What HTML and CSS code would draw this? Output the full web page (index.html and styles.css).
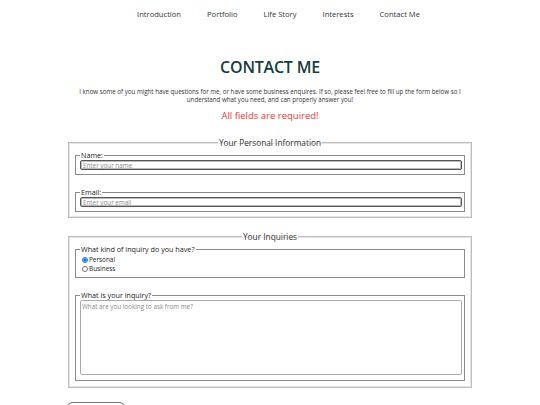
FILE: index.html
```html
<!DOCTYPE html>
<html>
<head>
<meta charset="utf-8">
<link rel="stylesheet" href="styles.css">
</head>
<body>
<nav class="nav">
  <a href="#">Introduction</a>
  <a href="#">Portfolio</a>
  <a href="#">Life Story</a>
  <a href="#">Interests</a>
  <a href="#">Contact Me</a>
</nav>
<main class="main">
  <h1 class="title">CONTACT ME</h1>
  <p class="intro">I know some of you might have questions for me, or have some business enquires. If so, please feel free to fill up the form below so I understand what you need, and can properly answer you!</p>
  <p class="req">All fields are required!</p>
  <form class="form">
    <fieldset class="group">
      <legend class="group-legend">Your Personal Information</legend>
      <fieldset class="field">
        <legend class="field-legend">Name:</legend>
        <input class="input" type="text" placeholder="Enter your name">
      </fieldset>
      <fieldset class="field field-gap">
        <legend class="field-legend">Email:</legend>
        <input class="input" type="text" placeholder="Enter your email">
      </fieldset>
    </fieldset>
    <fieldset class="group group-gap">
      <legend class="group-legend">Your Inquiries</legend>
      <fieldset class="field">
        <legend class="field-legend">What kind of inquiry do you have?</legend>
        <label class="radio"><input type="radio" name="k" checked>Personal</label>
        <label class="radio"><input type="radio" name="k">Business</label>
      </fieldset>
      <fieldset class="field field-gap2">
        <legend class="field-legend">What is your inquiry?</legend>
        <textarea class="area" placeholder="What are you looking to ask from me?"></textarea>
      </fieldset>
    </fieldset>
    <button class="btn" type="button">Submit</button>
  </form>
</main>
</body>
</html>
```
FILE: styles.css
```css
html, body { margin: 0; padding: 0; background: #fff; }
body { font-family: "Open Sans", "Noto Sans", sans-serif; color: #222; }
.nav {
  display: flex;
  justify-content: center;
  gap: 26px;
  padding-top: 9px;
  padding-left: 17px;
  height: 21px;
  font-size: 7.6px;
}
.nav a { color: #333; text-decoration: none; }
.main { width: 404px; margin: 0 auto; }
.title {
  margin: 26px 0 0;
  text-align: center;
  font-size: 16px;
  font-weight: 600;
  color: #123f3b;
  letter-spacing: -0.2px;
  line-height: 22px;
}
.intro {
  margin: 10px auto 0;
  width: 385px;
  text-align: center;
  font-size: 6.2px;
  line-height: 8px;
  color: #333;
}
.req {
  margin: 5px 0 0;
  text-align: center;
  font-size: 9.5px;
  color: #e53935;
  line-height: 14px;
}
.form { margin-top: 14px; }
.group {
  margin: 0;
  padding: 3px 6px 5px 6px;
  border: 1px solid #bdbdbd;
  box-shadow: inset 0 0 0 1px #e6e6e6;
}
.group-gap { margin-top: 13px; padding-bottom: 6px; }
.group-legend {
  margin: 0 auto;
  padding: 0 1px;
  font-size: 8.3px;
  line-height: 11px;
  color: #333;
}
.field {
  margin: 0;
  padding: 0 2px 4px 4px;
  border: 1px solid #8a8a8a;
}
.field-gap { margin-top: 13px; }
.field-gap2 { margin-top: 13px; padding-bottom: 5px; }
.field-legend {
  padding: 0 1px;
  font-size: 7.2px;
  line-height: 9px;
  color: #222;
}
.input {
  display: block;
  box-sizing: border-box;
  width: 100%;
  height: 10px;
  margin: 0;
  padding: 0 2px;
  border: 1px solid #555;
  border-radius: 2px;
  box-shadow: inset 0 0 0 1px #bbb;
  font-family: inherit;
  font-size: 6.3px;
}
.input::placeholder, .area::placeholder { color: #8a8a8a; }
.radio {
  display: flex;
  align-items: center;
  font-size: 6.4px;
  line-height: 9px;
  color: #222;
}
.radio:first-of-type { margin-top: 1px; }
.radio input { margin: 0 1px 0 2px; width: 6px; height: 6px; }
.area {
  display: block;
  box-sizing: border-box;
  width: 100%;
  height: 75px;
  margin: 0;
  padding: 1px 1px;
  border: 1px solid #aaa;
  border-radius: 2px;
  resize: none;
  font-family: inherit;
  font-size: 6.3px;
}
.btn {
  margin-top: 14px;
  width: 56px;
  height: 16px;
  border: 1px solid #777;
  border-radius: 4px;
  background: #fff;
  font-family: inherit;
  font-size: 8px;
}
```
